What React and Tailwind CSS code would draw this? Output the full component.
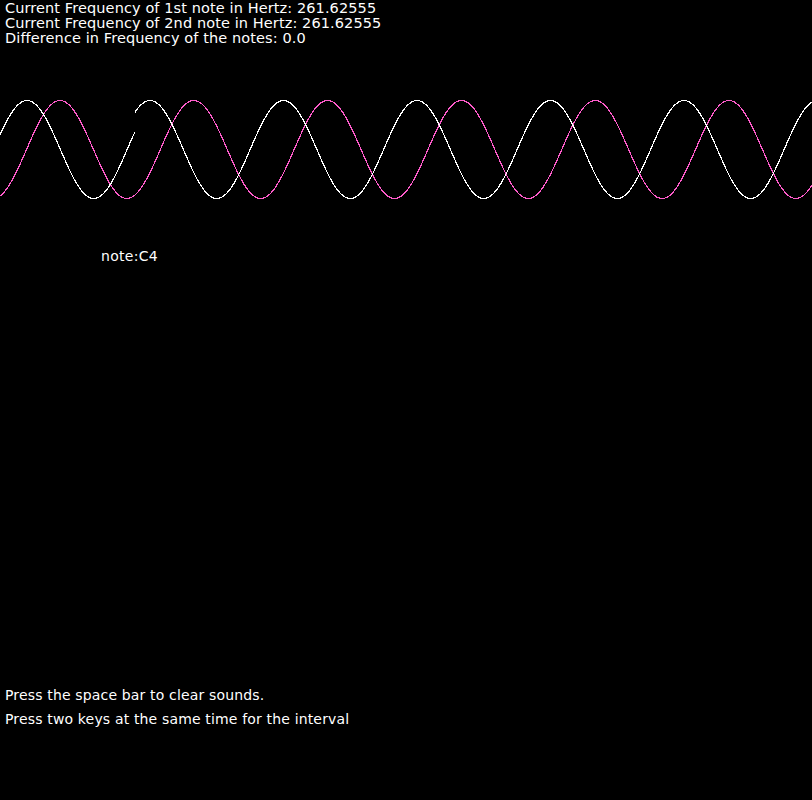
const MID = 149.5
const AMP = 49

// build polyline points for a sine strip, y measured in page coords
const wave = (x0, x1, peak, period) => {
  const pts = []
  for (let x = x0; x <= x1; x += 1) {
    const y = MID - AMP * Math.cos((2 * Math.PI * (x - peak)) / period)
    pts.push(`${x},${y.toFixed(2)}`)
  }
  return pts.join(' ')
}

const font = { fontFamily: '"DejaVu Sans", "Liberation Sans", sans-serif' }

export default function App() {
  return (
    <div className="flex h-[800px] w-full flex-col bg-black text-white" style={font}>
      <div className="pl-[5px] pt-[1px] text-[14.5px] leading-[15px] tracking-[0.1px] text-white">
        <p>Current Frequency of 1st note in Hertz: 261.62555</p>
        <p>Current Frequency of 2nd note in Hertz: 261.62555</p>
        <p>Difference in Frequency of the notes: 0.0</p>
      </div>

      <svg
        className="mt-[44px] block shrink-0"
        width="812"
        height="120"
        viewBox="0 90 812 120"
        shapeRendering="crispEdges"
      >
        <polyline points={wave(0, 812, 60, 133.8)} fill="none" stroke="#ff5ccb" strokeWidth="1.2" />
        <polyline points={wave(0, 135, 27, 133.5)} fill="none" stroke="#ffffff" strokeWidth="1.2" />
        <polyline points={wave(135, 812, 150, 133.5)} fill="none" stroke="#ffffff" strokeWidth="1.2" />
      </svg>

      <p className="ml-[101px] mt-[38px] text-[14px] leading-[16px] tracking-[0.3px]">note:C4</p>

      <div className="mt-auto mb-[69px] pl-[5px] text-[14px] leading-[24px] tracking-[0.16px]">
        <p>Press the space bar to clear sounds.</p>
        <p>Press two keys at the same time for the interval</p>
      </div>
    </div>
  )
}
